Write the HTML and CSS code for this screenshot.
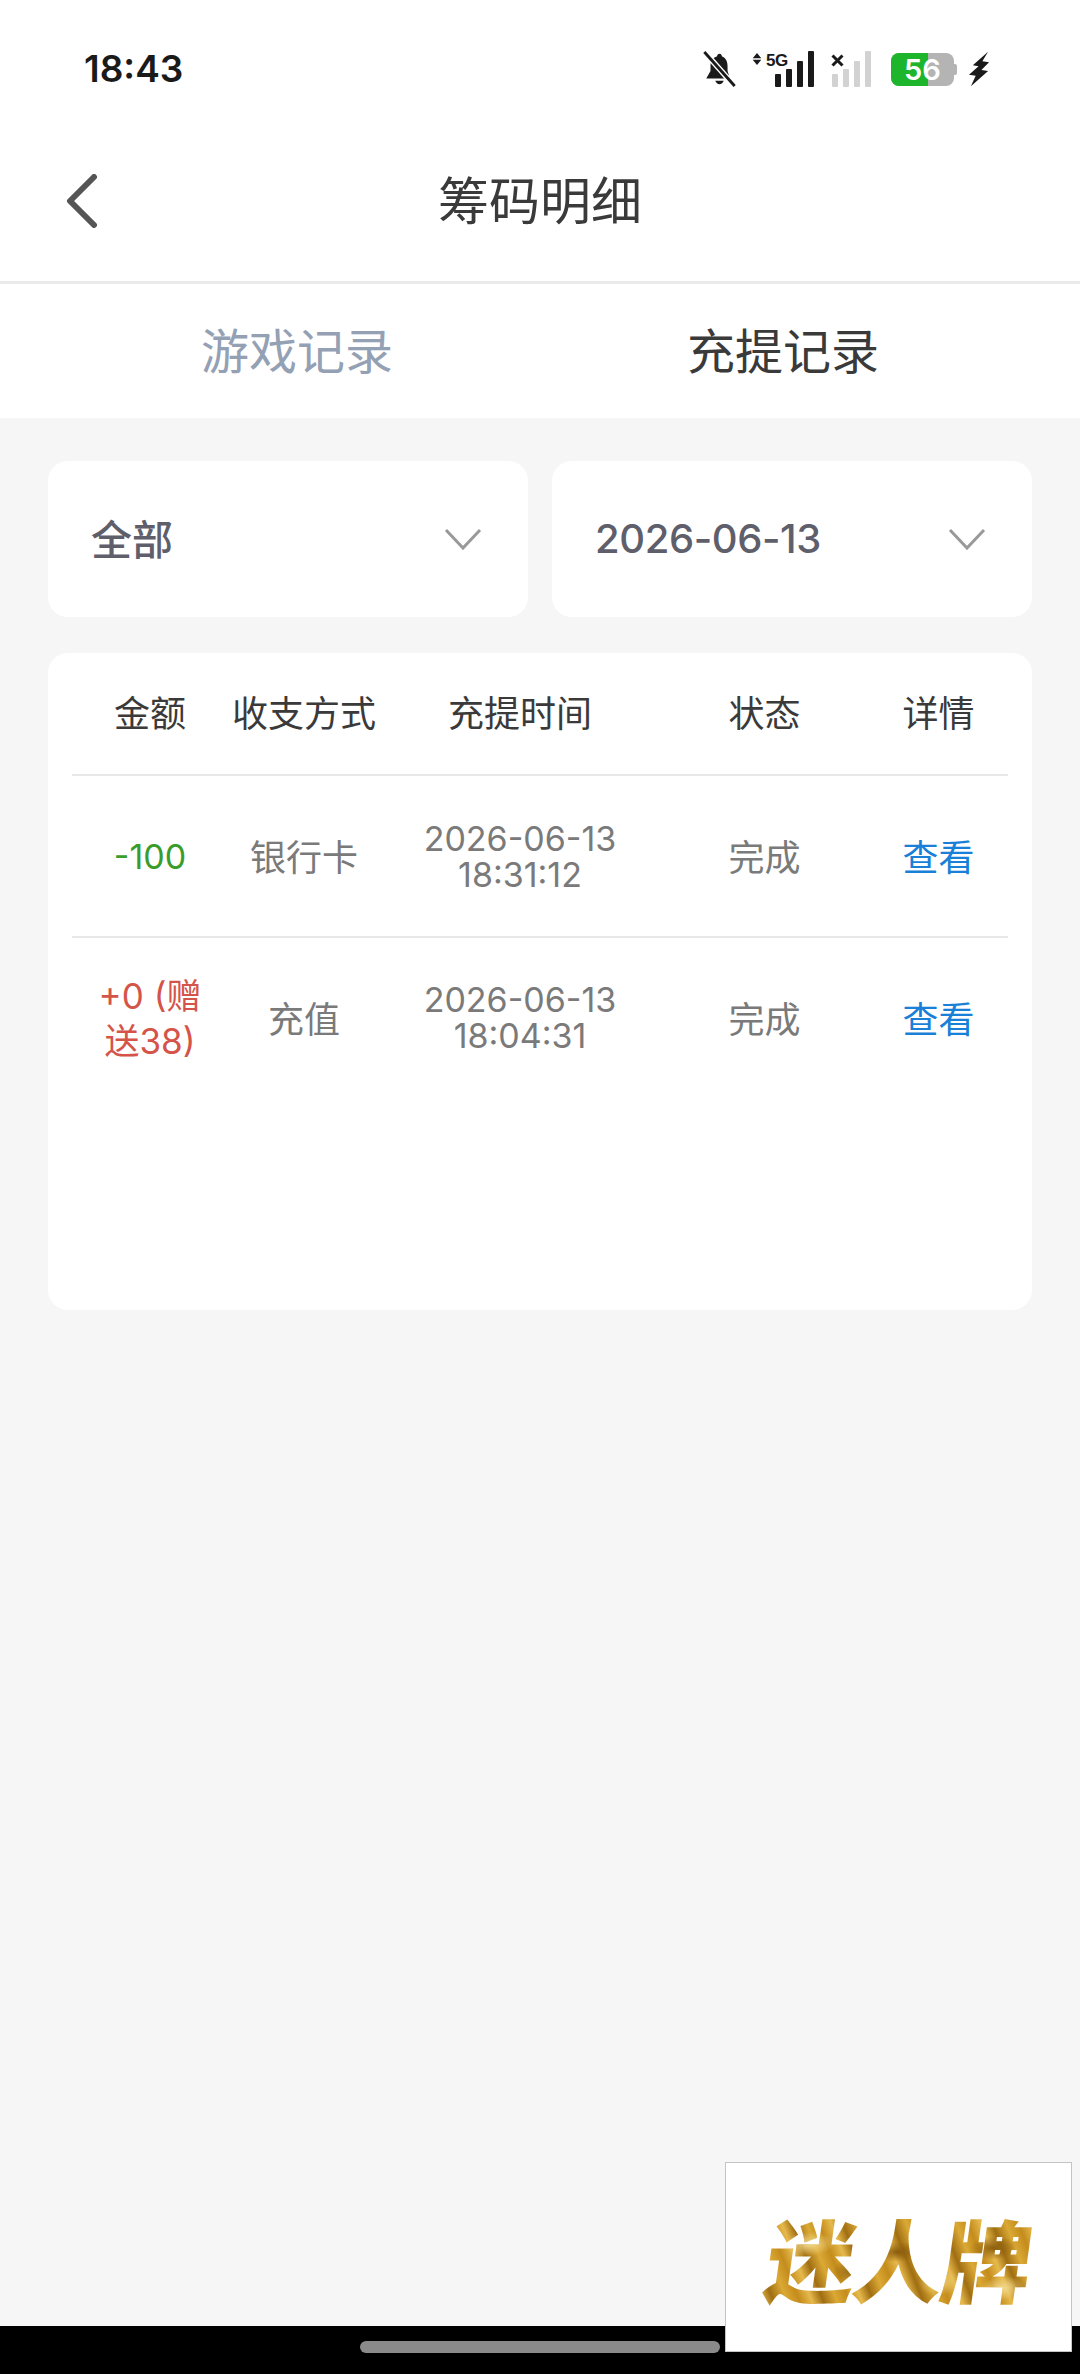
FILE: index.html
```html
<!DOCTYPE html>
<html lang="zh-CN">
<head>
  <meta charset="UTF-8">
  <title>筹码明细</title>
  <link rel="stylesheet" href="styles.css">
</head>
<body>
  <div id="page">
    <div id="statusbar">
      <span class="clock">18:43</span>
      <div class="status-icons">
        <svg class="bell" width="35" height="36" viewBox="0 0 34 38">
          <path d="M17 3c-1.500 0-2.500 1-2.500 2.500C9.500 7 7.500 11 7.500 16v5L3 29h25L25.500 21v-5c0-5-2-9-6-10.500C19.500 4 18.500 3 17 3z" fill="#1a1a1a"/>
          <path d="M12.500 31.500c1 2.500 2.500 3.500 4.500 3.500s3.500-1 4.500-3.500z" fill="#1a1a1a"/>
          <path d="M2 2l30 34" stroke="#fff" stroke-width="6"/>
          <path d="M1 1l32 36" stroke="#1a1a1a" stroke-width="3"/>
        </svg>
        <div class="signal">
          <svg class="updown" width="10" height="12" viewBox="0 0 10 14">
            <path d="M5 0l5 6H0zM5 14l5-6H0z" fill="#1a1a1a"/>
          </svg>
          <span class="net">5G</span>
          <div class="bars">
            <i class="b1"></i><i class="b2"></i><i class="b3"></i><i class="b4"></i>
          </div>
        </div>
        <div class="signal off">
          <svg class="cross" width="13" height="13" viewBox="0 0 13 13">
            <path d="M1.500 1.500l10 10M11.500 1.500l-10 10" stroke="#1a1a1a" stroke-width="3"/>
          </svg>
          <div class="bars">
            <i class="b1"></i><i class="b2"></i><i class="b3"></i><i class="b4"></i>
          </div>
        </div>
        <div class="battery">
          <div class="battery-fill"></div>
          <span class="battery-num">56</span>
          <div class="battery-cap"></div>
        </div>
        <svg class="bolt" width="21" height="36" viewBox="0 0 22 36">
          <path d="M20 0L4 14l6 1L0 24l7 1-5 11 18-16-7-1 8-8-7-1z" fill="#1a1a1a"/>
        </svg>
      </div>
    </div>

    <div id="header">
      <svg class="back" width="32" height="54" viewBox="0 0 32 54">
        <path d="M28 3L4 27l24 24" fill="none" stroke="#555" stroke-width="6" stroke-linecap="round" stroke-linejoin="round"/>
      </svg>
      <div class="title">筹码明细</div>
    </div>

    <div id="tabs">
      <div class="tab">游戏记录</div>
      <div class="tab active">充提记录</div>
    </div>

    <div id="content">
      <div class="filters">
        <div class="filter">
          <span class="filter-label">全部</span>
          <svg width="38" height="22" viewBox="0 0 38 22"><path d="M2 2l17 18L36 2" fill="none" stroke="#999" stroke-width="3"/></svg>
        </div>
        <div class="filter">
          <span class="filter-date">2026-06-13</span>
          <svg width="38" height="22" viewBox="0 0 38 22"><path d="M2 2l17 18L36 2" fill="none" stroke="#999" stroke-width="3"/></svg>
        </div>
      </div>

      <div class="records">
        <div class="row head">
          <div>金额</div>
          <div>收支方式</div>
          <div>充提时间</div>
          <div>状态</div>
          <div>详情</div>
        </div>
        <div class="row">
          <div class="amount minus">-100</div>
          <div>银行卡</div>
          <div class="time">2026-06-13<br>18:31:12</div>
          <div>完成</div>
          <div class="link">查看</div>
        </div>
        <div class="row last">
          <div class="amount plus">+0 (赠<br>送38)</div>
          <div>充值</div>
          <div class="time">2026-06-13<br>18:04:31</div>
          <div>完成</div>
          <div class="link">查看</div>
        </div>
      </div>
    </div>

    <div id="navbar"><div class="handle"></div></div>

    <div id="logo"><span>迷人牌</span></div>
  </div>
</body>
</html>
```

FILE: styles.css
```css
html, body {
  margin: 0;
  padding: 0;
}
body {
  font-family: Inter, "Noto Sans CJK SC", sans-serif;
  background: #f6f6f6;
}
#page {
  position: relative;
  display: flex;
  flex-direction: column;
  width: 1080px;
  height: 2374px;
  overflow: hidden;
}

/* status bar */
#statusbar {
  display: flex;
  justify-content: space-between;
  align-items: center;
  box-sizing: border-box;
  height: 120px;
  padding: 48px 90px 32px 84px;
  background: #fff;
}
.clock {
  font-size: 37px;
  font-weight: 600;
  color: #1a1a1a;
}
.status-icons {
  display: flex;
  align-items: center;
  margin-top: 2px;
}
.bell {
  margin-right: 14px;
}
.signal {
  position: relative;
  display: flex;
  align-items: flex-end;
  height: 36px;
}
.updown {
  position: absolute;
  left: 1px;
  top: 2px;
}
.net {
  position: absolute;
  left: 15px;
  top: 0;
  font-family: "Liberation Sans", sans-serif;
  font-size: 17px;
  font-weight: 700;
  letter-spacing: -0.5px;
  color: #1a1a1a;
}
.bars {
  display: flex;
  align-items: flex-end;
  gap: 5px;
  margin-left: 24px;
}
.bars i {
  display: block;
  width: 6px;
  background: #1a1a1a;
  border-radius: 1px;
}
.bars .b1 { height: 13px; }
.bars .b2 { height: 18px; }
.bars .b3 { height: 26px; }
.bars .b4 { height: 36px; }
.signal.off {
  margin-left: 16px;
}
.signal.off .bars {
  margin-left: 2px;
}
.signal.off .bars i {
  background: #d2d2d2;
}
.signal.off .cross {
  position: absolute;
  left: 1px;
  top: 3px;
}
.battery {
  position: relative;
  width: 63px;
  height: 33px;
  margin-left: 20px;
  background: #b4b4b4;
  border-radius: 8px;
}
.battery-fill {
  width: 37px;
  height: 100%;
  background: #1cb52c;
  border-radius: 8px 0 0 8px;
}
.battery-num {
  position: absolute;
  left: 0;
  right: 0;
  top: 0;
  font-size: 29px;
  font-weight: 600;
  line-height: 33px;
  text-align: center;
  color: #fff;
}
.battery-cap {
  position: absolute;
  right: -3px;
  top: 11px;
  width: 3px;
  height: 11px;
  background: #b4b4b4;
  border-radius: 0 2px 2px 0;
}
.bolt {
  margin-left: 15px;
}

/* header */
#header {
  position: relative;
  display: flex;
  justify-content: center;
  align-items: center;
  height: 161px;
  background: #fff;
  border-bottom: 3px solid #eaeaea;
}
.back {
  position: absolute;
  left: 66px;
  top: 54px;
}
.title {
  margin-bottom: 5px;
  font-size: 51px;
  color: #3a3a3a;
}

/* tabs */
#tabs {
  display: flex;
  padding: 0 54px;
  background: #fff;
}
.tab {
  flex: 1;
  box-sizing: border-box;
  height: 134px;
  padding-top: 2px;
  line-height: 132px;
  text-align: center;
  font-size: 48px;
  color: #94a0b4;
}
.tab.active {
  color: #3a3a3a;
}

/* content */
#content {
  flex: 1;
  padding: 43px 48px 0;
}
.filters {
  display: flex;
  gap: 24px;
}
.filter {
  flex: 1;
  display: flex;
  justify-content: space-between;
  align-items: center;
  box-sizing: border-box;
  height: 156px;
  padding: 0 46px 0 43px;
  background: #fff;
  border-radius: 20px;
  color: #5f5f6b;
}
.filter-label {
  margin-bottom: 5px;
  font-size: 41px;
  font-weight: 500;
}
.filter-date {
  margin-bottom: 2px;
  font-size: 40px;
  font-weight: 500;
  letter-spacing: -0.4px;
}
.records {
  box-sizing: border-box;
  height: 657px;
  margin-top: 36px;
  padding: 0 24px;
  background: #fff;
  border-radius: 20px;
}
.row {
  display: grid;
  grid-template-columns: 156px 152px 280px 209px 139px;
  align-items: center;
  height: 162px;
  padding-bottom: 2px;
  border-bottom: 2px solid #e8e8e8;
  box-sizing: border-box;
  text-align: center;
  font-size: 36px;
  color: #7a7a7a;
}
.row.head {
  height: 123px;
  padding-bottom: 5px;
  color: #3a3a3a;
}
.row.last {
  border-bottom: none;
  padding-bottom: 5px;
}
.amount {
  font-size: 35px;
  line-height: 45px;
}
.minus {
  font-size: 34px;
  margin-top: 2px;
  color: #3a9c2a;
}
.plus {
  margin-top: 4px;
  color: #d4544a;
}
.time {
  margin-top: 3px;
  font-size: 34px;
  line-height: 36px;
}
.link {
  color: #1a7fd6;
}

/* bottom */
#navbar {
  display: flex;
  justify-content: center;
  height: 48px;
  background: #000;
}
.handle {
  width: 360px;
  height: 12px;
  margin-top: 15px;
  background: #8a8a8a;
  border-radius: 6px;
}
#logo {
  position: absolute;
  left: 725px;
  top: 2162px;
  display: flex;
  justify-content: center;
  align-items: center;
  box-sizing: border-box;
  width: 347px;
  height: 190px;
  background: #fff;
  border: 1px solid #c4c4c4;
}
#logo span {
  font-size: 90px;
  font-weight: 900;
  letter-spacing: -2px;
  transform: skewX(-8deg);
  background:
    radial-gradient(ellipse 26px 12px at 40px 52px, #f3d98a, transparent),
    radial-gradient(ellipse 22px 14px at 90px 78px, #7d5208, transparent),
    radial-gradient(ellipse 24px 10px at 130px 60px, #8a5c0c, transparent),
    radial-gradient(ellipse 20px 14px at 175px 90px, #f0d27c, transparent),
    radial-gradient(ellipse 24px 12px at 225px 56px, #8c5e0e, transparent),
    radial-gradient(ellipse 22px 12px at 240px 96px, #f2d88c, transparent),
    repeating-linear-gradient(62deg, #c48c1c 0, #e6b94c 11px, #a06e12 21px, #dba935 33px, #c48c1c 44px);
  -webkit-background-clip: text;
  background-clip: text;
  color: transparent;
}
```
